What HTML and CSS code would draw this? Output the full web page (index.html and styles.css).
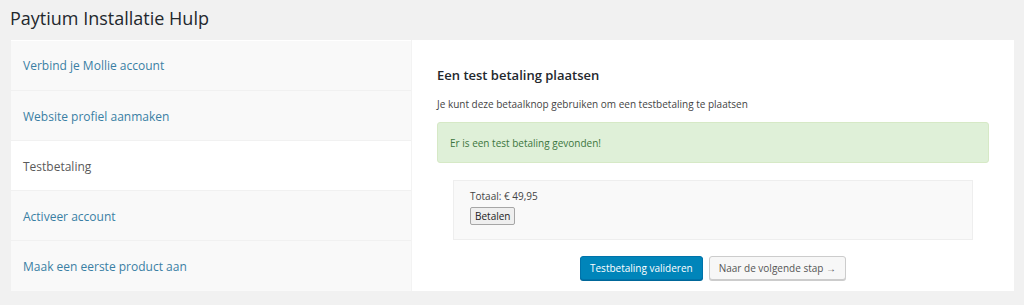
FILE: index.html
```html
<!DOCTYPE html>
<html>
<head>
<meta charset="utf-8">
<link rel="stylesheet" href="styles.css">
</head>
<body>
<div class="wrap">
  <h1 class="title">Paytium Installatie Hulp</h1>
  <div class="panel">
    <ul class="steps">
      <li class="step"><a href="#">Verbind je Mollie account</a></li>
      <li class="step"><a href="#">Website profiel aanmaken</a></li>
      <li class="step active"><span>Testbetaling</span></li>
      <li class="step"><a href="#">Activeer account</a></li>
      <li class="step"><a href="#">Maak een eerste product aan</a></li>
    </ul>
    <div class="content">
      <h2 class="heading">Een test betaling plaatsen</h2>
      <p class="intro">Je kunt deze betaalknop gebruiken om een testbetaling te plaatsen</p>
      <div class="notice">Er is een test betaling gevonden!</div>
      <div class="paybox">
        <div class="total">Totaal: € 49,95</div>
        <button class="pay">Betalen</button>
      </div>
      <div class="actions">
        <button class="btn primary">Testbetaling valideren</button>
        <button class="btn secondary">Naar de volgende stap →</button>
      </div>
    </div>
  </div>
</div>
</body>
</html>
```
FILE: styles.css
```css
* { box-sizing: border-box; }
html, body { margin: 0; padding: 0; }
body {
  background: #f1f1f1;
  font-family: "Open Sans", "Noto Sans", sans-serif;
  color: #444;
  width: 1024px;
  height: 305px;
  overflow: hidden;
}
.wrap { padding: 0 10px 0 11px; }
.title {
  margin: 0;
  padding: 4px 0 0 0;
  margin-left: -1px;
  height: 40px;
  font-size: 18px;
  font-weight: 400;
  color: #23282d;
  line-height: 28px;
}
.panel {
  display: flex;
  width: 1003px;
  height: 251px;
  background: #fff;
}
.steps {
  list-style: none;
  margin: 0;
  padding: 0;
  width: 401px;
  display: flex;
  flex-direction: column;
}
.step {
  height: 50px;
  background: #f9f9f9;
  border-bottom: 1px solid #f1f1f1;
  padding-left: 12px;
  padding-top: 1px;
  display: flex;
  align-items: center;
  font-size: 12px;
}
.step:first-child { height: 50px; margin-top: 1px; padding-top: 0; }
.step:last-child { border-bottom: none; }
.step a { color: #3a7fa4; text-decoration: none; }
.step.active { background: #fff; }
.step.active span { color: #5a5a5a; }
.content {
  flex: 1;
  padding: 25px 25px 0 25px;
  display: flex;
  flex-direction: column;
  border-left: 1px solid #f3f3f3;
}
.heading {
  margin: 0;
  font-size: 13px;
  font-weight: 600;
  color: #23282d;
  line-height: 20px;
}
.intro {
  margin: 11px 0 0;
  font-size: 10px;
  line-height: 16px;
  color: #444;
}
.notice {
  margin-top: 10px;
  height: 41px;
  width: 552px;
  background: #dff0d8;
  border: 1px solid #d6e9c6;
  border-radius: 3px;
  color: #3c763d;
  font-size: 10px;
  display: flex;
  align-items: center;
  padding-left: 12px;
}
.paybox {
  margin: 17px 0 0 16px;
  width: 520px;
  height: 60px;
  background: #f9f9f9;
  border: 1px solid #eee;
  padding: 8px 16px;
}
.total { font-size: 10px; line-height: 14px; color: #444; }
.pay {
  font-family: inherit;
  font-size: 10px;
  height: 18px;
  padding: 0 4px;
  margin-top: 1px;
  background: #efefef;
  border: 1px solid #a6a6a6;
  border-radius: 2px;
  color: #222;
  line-height: 14px;
}
.actions {
  margin-top: 16px;
  display: flex;
  justify-content: center;
  gap: 6px;
}
.btn {
  font-family: inherit;
  font-size: 10px;
  height: 24px;
  border-radius: 3px;
  padding: 0 9px;
  line-height: 22px;
}
.btn.primary {
  background: #0085ba;
  border: 1px solid #0073aa;
  color: #fff;
  box-shadow: 0 1px 0 #006799;
}
.btn.secondary {
  background: #f7f7f7;
  border: 1px solid #ccc;
  color: #555;
  box-shadow: 0 1px 0 #ccc;
}
```
